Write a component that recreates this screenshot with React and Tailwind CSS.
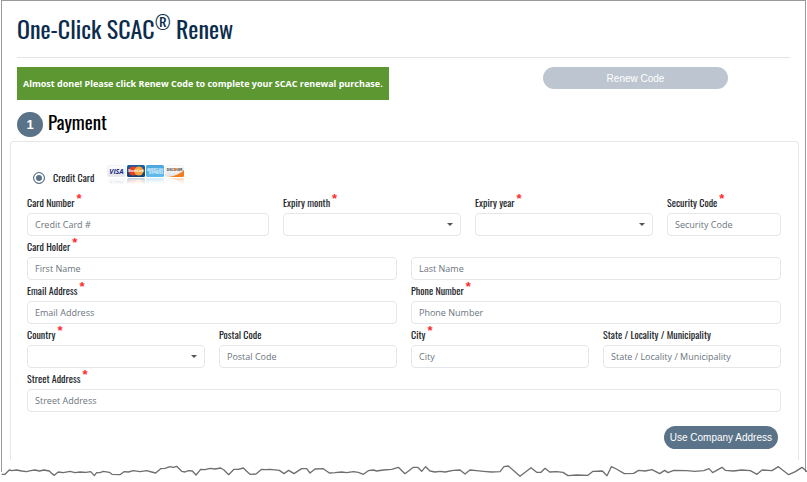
const NARROW = "font-['Oswald','Liberation_Sans_Narrow','Roboto_Condensed',sans-serif]";

const control =
  "block w-full h-[23px] rounded border border-[#e4e7ea] bg-white px-[7px] text-[9px] text-[#495057] placeholder:text-[#6c757d] placeholder:opacity-100 outline-none focus:border-[#5b7389]";

/* Field label with the red star for required fields */
function Label({ htmlFor, required, children }) {
  return (
    <label htmlFor={htmlFor} className={`flex h-[21px] items-center text-[10px] leading-[14px] text-[#212529] ${NARROW}`}>
      {children}
      {required && (
        <span className="ml-[2px] h-[21px] text-[13px] leading-[13px] font-bold text-[#ff2a2a] font-['Liberation_Sans',sans-serif]">*</span>
      )}
    </label>
  );
}

function TextField({ id, label, placeholder, required, className }) {
  return (
    <div className={className}>
      <Label htmlFor={id} required={required}>{label}</Label>
      <input id={id} type="text" placeholder={placeholder || label} className={control} />
    </div>
  );
}

function SelectField({ id, label, required, className }) {
  return (
    <div className={className}>
      <Label htmlFor={id} required={required}>{label}</Label>
      <div className="relative">
        <select id={id} className={`${control} appearance-none`} defaultValue="">
          <option value=""></option>
        </select>
        <svg viewBox="0 0 6 3" className="pointer-events-none absolute right-2 top-[10px] h-[3px] w-[6px]" fill="#555">
          <path d="M0 0h6L3 3z" />
        </svg>
      </div>
    </div>
  );
}

/* Accepted card brands with a faint reflection below */
function CardBrands() {
  return (
    <svg width="78" height="24" viewBox="0 0 78 24" role="img" aria-label="Visa, MasterCard, American Express, Discover">
      <defs>
        <linearGradient id="white" x1="0" y1="0" x2="0" y2="1">
          <stop offset="0" stopColor="#ffffff" />
          <stop offset="1" stopColor="#e3e3e8" />
        </linearGradient>
        <linearGradient id="navy" x1="0" y1="0" x2="0" y2="1">
          <stop offset="0" stopColor="#1f5f9f" />
          <stop offset="1" stopColor="#16406f" />
        </linearGradient>
        <linearGradient id="sky" x1="0" y1="0" x2="0" y2="1">
          <stop offset="0" stopColor="#4aa5dc" />
          <stop offset="1" stopColor="#62bdec" />
        </linearGradient>
        <linearGradient id="fade" x1="0" y1="1" x2="0" y2="0">
          <stop offset="0" stopColor="#fff" stopOpacity="0.3" />
          <stop offset="0.6" stopColor="#fff" stopOpacity="0" />
        </linearGradient>
        <mask id="reflect">
          <rect width="78" height="13" fill="url(#fade)" />
        </mask>
        <g id="brands">
          <rect x="0.5" y="0.5" width="18" height="11" rx="1.5" fill="url(#white)" stroke="#e6e6ea" strokeWidth="0.5" />
          <text x="9.5" y="8.6" textAnchor="middle" fontSize="7" fontWeight="bold" fontStyle="italic" fill="#1b2f86" fontFamily="Open Sans, sans-serif">VISA</text>
          <rect x="20" y="0" width="18" height="12" rx="1.5" fill="url(#navy)" />
          <circle cx="26.2" cy="6" r="4.6" fill="#e0402c" />
          <circle cx="31.8" cy="6" r="4.6" fill="#f6a63a" />
          <text x="29" y="7" textAnchor="middle" fontSize="2.8" fontWeight="bold" fill="#fff" fontFamily="Liberation Sans, sans-serif">MasterCard</text>
          <rect x="39" y="0" width="18" height="12" rx="1.5" fill="url(#sky)" />
          <text x="48" y="5.8" textAnchor="middle" fontSize="3" fontWeight="bold" fill="#e2f4ff" fontFamily="Liberation Sans, sans-serif">AMERICAN</text>
          <text x="49" y="9" textAnchor="middle" fontSize="3" fontWeight="bold" fill="#e2f4ff" fontFamily="Liberation Sans, sans-serif">EXPRESS</text>
          <rect x="58.5" y="0.5" width="18" height="11" rx="1.5" fill="url(#white)" stroke="#e6e6ea" strokeWidth="0.5" />
          <path d="M60 12C67 11.5 74 8.5 77 5v5.500q0 1.500-1.500 1.500z" fill="#f07d22" />
          <text x="67.500" y="5.600" textAnchor="middle" fontSize="3" fontWeight="bold" fill="#333" fontFamily="Liberation Sans, sans-serif">DISCOVER</text>
          <circle cx="68.300" cy="4.500" r="1.300" fill="#f07d22" />
        </g>
      </defs>
      <use href="#brands" />
      <g transform="translate(0 25) scale(1 -1)">
        <g mask="url(#reflect)">
          <use href="#brands" />
        </g>
      </g>
    </svg>
  );
}

/* Torn paper line that closes the page */
function TornEdge() {
  return (
    <svg viewBox="0 0 2421 51" preserveAspectRatio="none" className="relative -mt-[7px] block h-[17px] w-full" aria-hidden="true">
      <polyline
        fill="none"
        stroke="#6f6f6f"
        strokeWidth="4"
        strokeLinejoin="round"
        points="5,28 15,28 28,15 36,17 50,15 65,18 80,20 92,17 105,15 118,18 132,15 148,18 156,26 163,31 170,25 175,21 190,23 210,19 225,23 240,21 258,22 272,20 283,32 290,23 300,23 310,19 328,22 336,28 360,29 372,20 385,21 400,17 420,20 440,17 455,21 467,24 482,11 495,10 510,5 520,7 530,4 545,19 555,21 565,17 577,18 588,30 602,13 615,14 630,10 645,12 662,9 672,15 686,29 702,13 715,13 730,9 740,19 750,28 768,27 785,13 797,14 810,13 838,16 852,26 866,16 882,26 905,11 920,11 930,24 945,12 970,11 988,24 1005,23 1025,21 1040,23 1060,20 1075,22 1090,28 1105,17 1120,15 1130,18 1150,15 1175,13 1195,7 1215,26 1240,7 1253,7 1265,19 1277,5 1290,18 1305,21 1320,19 1335,21 1360,16 1380,15 1395,27 1410,15 1430,17 1450,19 1475,21 1500,20 1512,5 1525,3 1560,34 1593,8 1610,22 1623,22 1635,10 1649,21 1670,20 1689,22 1704,32 1730,30 1764,31 1779,19 1807,18 1821,32 1834,5 1849,12 1873,26 1901,25 1916,16 1935,18 1956,14 1979,26 1994,16 2004,23 2021,16 2060,17 2085,19 2111,17 2127,11 2138,23 2166,7 2176,16 2200,18 2225,15 2251,17 2271,28 2286,15 2316,17 2335,5 2366,29 2386,20 2406,7 2421,20"
      />
    </svg>
  );
}

export default function App() {
  return (
    <div className="bg-white font-['Open_Sans',sans-serif]">
      <main className="mx-px border-x border-t border-[#999] pb-[12px]">
        <header className="mx-[15px] border-b border-[#e4e4e4] pt-3 pb-[13px]">
          <h1 className={`text-[24px] leading-[31px] text-[#0b2c4d] ${NARROW}`}>
            One-Click SCAC<sup className="-top-[9px] text-[18px]">®</sup> Renew
          </h1>
        </header>

        <div className="mt-[9px] mr-[77px] ml-[15px] flex items-start justify-between">
          <p className="bg-[#5c9732] px-[6px] py-[9px] text-[9px] leading-[15px] font-bold text-white">
            Almost done! Please click Renew Code to complete your SCAC renewal purchase.
          </p>
          <button type="button" className="h-[22px] w-[185px] rounded-full bg-[#bdc6d0] text-[10px] text-white font-['Liberation_Sans',sans-serif]">
            Renew Code
          </button>
        </div>

        <div className="mt-[9px] ml-[15px] flex h-[28px] items-start gap-[5px]">
          <span className="mt-[3px] flex h-[25px] w-[26px] items-center justify-center rounded-full bg-[#5b7389] text-[13px] font-bold text-white font-['Liberation_Sans',sans-serif]">
            1
          </span>
          <h2 className={`text-[19px] leading-[24px] text-black ${NARROW}`}>Payment</h2>
        </div>

        <section className="mr-[6px] ml-[8px] mt-[4px] rounded-t border-x border-t border-[#e6e6e6] pr-[17px] pl-4 pt-[23px] pb-[11px]">
          <div className="flex h-[27px] items-start">
            <label className={`mt-[5px] ml-[6px] flex items-center gap-[8px] text-[10px] leading-[16px] text-[#212529] ${NARROW}`}>
              <input
                type="radio"
                name="method"
                defaultChecked
                className="h-3 w-3 appearance-none rounded-full border border-[#5b7389] bg-white checked:bg-[#5b7389] checked:shadow-[inset_0_0_0_2px_white]"
              />
              Credit Card
            </label>
            <div className="ml-[13px]">
              <CardBrands />
            </div>
          </div>

          <form className="grid grid-cols-12 gap-x-[14px]">
            <TextField id="cardNumber" label="Card Number" placeholder="Credit Card #" required className="col-span-4" />
            <SelectField id="expMonth" label="Expiry month" required className="col-span-3" />
            <SelectField id="expYear" label="Expiry year" required className="col-span-3" />
            <TextField id="cvv" label="Security Code" required className="col-span-2" />

            <TextField id="firstName" label="Card Holder" placeholder="First Name" required className="col-span-6" />
            <div className="col-span-6 flex items-end">
              <input type="text" aria-label="Last Name" placeholder="Last Name" className={control} />
            </div>

            <TextField id="email" label="Email Address" required className="col-span-6" />
            <TextField id="phone" label="Phone Number" required className="col-span-6" />

            <SelectField id="country" label="Country" required className="col-span-3" />
            <TextField id="postal" label="Postal Code" className="col-span-3" />
            <TextField id="city" label="City" required className="col-span-3" />
            <TextField id="state" label="State / Locality / Municipality" className="col-span-3" />

            <TextField id="street" label="Street Address" required className="col-span-12" />

            <div className="col-span-12 mt-[14px] mr-[3px] flex justify-end">
              <button type="button" className="h-[23px] rounded-full bg-[#5b7389] px-[6px] text-[10px] text-white font-['Liberation_Sans',sans-serif]">
                Use Company Address
              </button>
            </div>
          </form>
        </section>
      </main>
      <TornEdge />
    </div>
  );
}
